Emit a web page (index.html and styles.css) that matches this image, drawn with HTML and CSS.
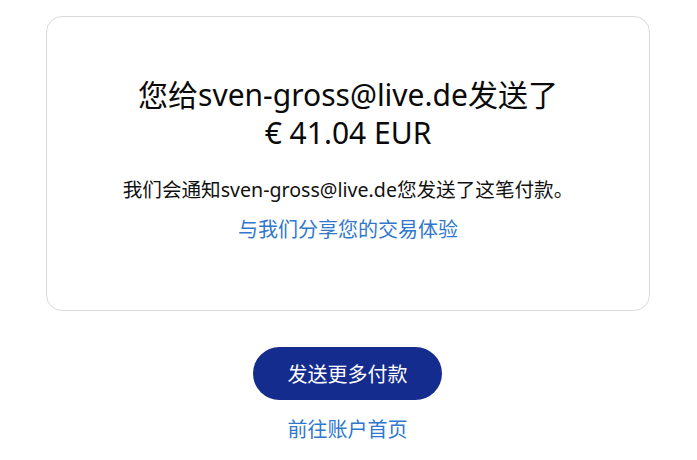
FILE: index.html
```html
<!DOCTYPE html>
<html lang="zh">
<head>
<meta charset="utf-8">
<link rel="stylesheet" href="styles.css">
</head>
<body>
<main class="page">
  <section class="card">
    <h1 class="title">您给sven-gross@live.de发送了<br>€ 41.04 EUR</h1>
    <p class="note">我们会通知sven-gross@live.de您发送了这笔付款。</p>
    <a class="link share" href="#">与我们分享您的交易体验</a>
  </section>
  <div class="actions">
    <button class="btn">发送更多付款</button>
    <a class="link home" href="#">前往账户首页</a>
  </div>
</main>
</body>
</html>
```

FILE: styles.css
```css
html, body {
  margin: 0;
  padding: 0;
  background: #fff;
}
body {
  font-family: "Noto Sans", "Noto Sans CJK SC", sans-serif;
  color: #111;
}
.page {
  padding-top: 16px;
  display: flex;
  flex-direction: column;
  align-items: center;
}
.card {
  box-sizing: border-box;
  width: 604px;
  margin-left: -1px;
  border: 1px solid #dadada;
  border-radius: 16px;
  padding: 59px 20px 66px;
  display: flex;
  flex-direction: column;
  align-items: center;
  text-align: center;
}
.title {
  margin: 0;
  font-size: 30px;
  line-height: 38px;
  font-weight: 400;
  color: #0a0a0a;
}
.note {
  margin: 24px 0 0;
  font-size: 19.6px;
  line-height: 28px;
  color: #111;
}
.link {
  color: #2f78cc;
  text-decoration: none;
  font-size: 20px;
  line-height: 28px;
}
.share {
  margin-top: 12px;
}
.actions {
  margin-top: 36px;
  margin-left: -2px;
  display: flex;
  flex-direction: column;
  align-items: center;
}
.btn {
  width: 189px;
  height: 53px;
  border: none;
  border-radius: 27px;
  background: #142c8e;
  color: #fff;
  font-family: "Noto Sans", "Noto Sans CJK SC", sans-serif;
  font-size: 20px;
  padding: 0;
}
.home {
  margin-top: 16px;
}
```
